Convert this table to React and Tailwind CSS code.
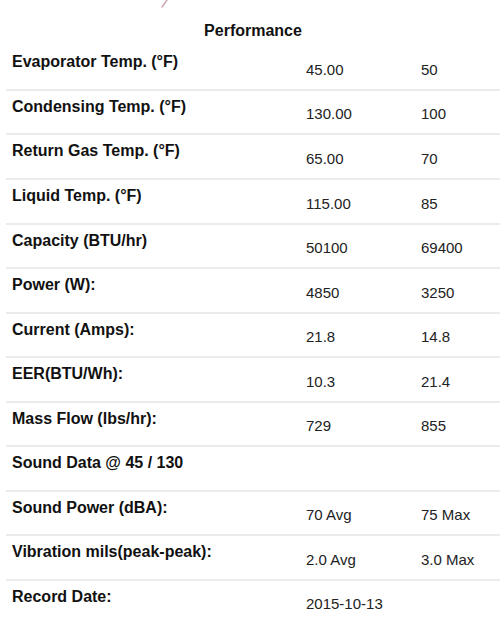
import React from 'react';

const rows = [
    { label: 'Evaporator Temp. (°F)', a: '45.00', b: '50' },
    { label: 'Condensing Temp. (°F)', a: '130.00', b: '100' },
    { label: 'Return Gas Temp. (°F)', a: '65.00', b: '70' },
    { label: 'Liquid Temp. (°F)', a: '115.00', b: '85' },
    { label: 'Capacity (BTU/hr)', a: '50100', b: '69400' },
    { label: 'Power (W):', a: '4850', b: '3250' },
    { label: 'Current (Amps):', a: '21.8', b: '14.8' },
    { label: 'EER(BTU/Wh):', a: '10.3', b: '21.4' },
    { label: 'Mass Flow (lbs/hr):', a: '729', b: '855' },
    { label: 'Sound Data @ 45 / 130', a: '', b: '' },
    { label: 'Sound Power (dBA):', a: '70 Avg', b: '75 Max' },
    { label: 'Vibration mils(peak-peak):', a: '2.0 Avg', b: '3.0 Max' },
    { label: 'Record Date:', a: '2015-10-13', b: '' },
];

const App = () => {
    return (
        <div className="relative w-[500px] h-[623px] overflow-hidden bg-white font-['Liberation_Sans',Arial,sans-serif]">
            {/* tail of a cut-off title letter */}
            <svg className="absolute left-[159px] top-0" width="10" height="9" viewBox="0 0 10 9">
                <path d="M8 0 L3 7" stroke="#c9a3b4" strokeWidth="1.4" strokeLinecap="round" fill="none" />
            </svg>

            <div className="ml-[6px]">
                <div className="h-[46.4px] pt-[22px] text-center">
                    <h2 className="text-[16px] leading-[18.4px] font-bold text-[#111]">Performance</h2>
                </div>

                {rows.map((r) => (
                    <div key={r.label} className="grid grid-cols-[297px_113px_1fr] h-[44.55px] border-b-2 border-[#ebebeb]">
                        <div className="pl-[6px] pt-[7px] text-[16px] leading-[18.4px] font-bold text-[#111] whitespace-nowrap">
                            {r.label}
                        </div>
                        <div className="pl-[3px] pt-[14.5px] text-[15px] leading-[17.25px] text-[#222]">{r.a}</div>
                        <div className="pl-[5px] pt-[14.5px] text-[15px] leading-[17.25px] text-[#222]">{r.b}</div>
                    </div>
                ))}
            </div>
        </div>
    );
};

export default App;
